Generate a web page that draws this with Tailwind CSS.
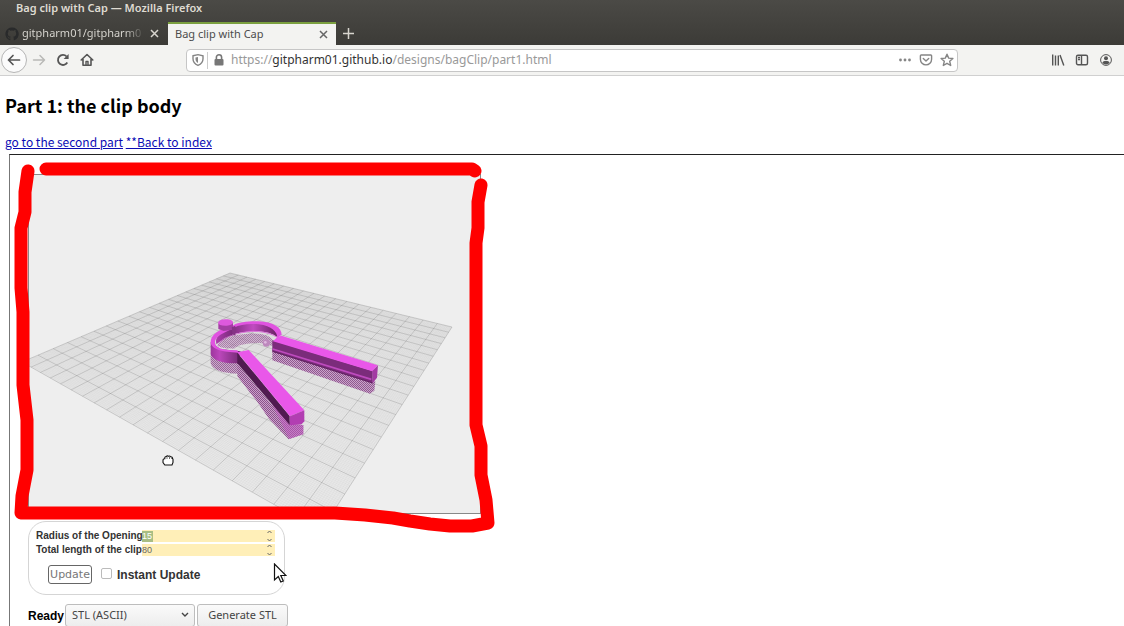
<!DOCTYPE html>
<html lang="en">
<head>
<meta charset="utf-8">
<title>Bag clip with Cap</title>
<script src="https://cdn.jsdelivr.net/npm/@tailwindcss/browser@4"></script>
</head>
<body class="min-h-screen overflow-hidden bg-white text-black">
<header class="font-['Noto_Sans',sans-serif]">
  <div class="bg-linear-to-b from-[#4b4a46] to-[#3c3b37]">
    <div class="flex h-[22px] items-start pl-4 text-[11px] leading-4 font-semibold text-[#dfdbd2]">Bag clip with Cap — Mozilla Firefox</div>
    <div class="flex h-[23px] items-stretch text-[11px]">
      <div class="flex w-[168px] items-center gap-[2px] pr-[6px] pl-1">
        <svg class="size-4 shrink-0" viewBox="0 0 16 16" fill="#292a2b"><path d="M8 1.5a6.5 6.5 0 0 0-2.1 12.7c.4.1.5-.2.5-.4v-1.300c-1.800.4-2.200-.8-2.200-.8-.3-.7-.7-.9-.7-.9-.6-.4 0-.4 0-.4.7 0 1 .7 1 .7.6 1 1.500.7 1.900.5 0-.4.2-.7.4-.8-1.500-.2-3-.7-3-3.200 0-.7.3-1.300.7-1.800-.1-.2-.3-.9.1-1.700 0 0 .5-.2 1.700.7a6 6 0 0 1 3.400 0c1.200-.9 1.700-.7 1.700-.7.4.8.2 1.500.1 1.700.4.5.7 1.100.7 1.800 0 2.500-1.500 3-3 3.200.3.2.5.6.5 1.200v1.800c0 .2.1.5.5.4A6.5 6.5 0 0 0 8 1.500z"/></svg>
        <span class="min-w-0 flex-1 bg-linear-to-r from-[#dedcd6] from-85% to-[#44433f] bg-clip-text whitespace-nowrap text-transparent">gitpharm01/gitpharm0</span>
        <button aria-label="Close tab" class="flex size-4 items-center justify-center text-[#d8d5ce]"><svg class="size-[9px]" viewBox="0 0 9 9" fill="none" stroke="currentColor" stroke-width="1.5"><path d="M1 1l7 7M8 1l-7 7"/></svg></button>
      </div>
      <div class="flex w-[168px] items-center justify-between border-t-2 border-[#7ba03f] bg-[#f3f3f1] pr-[5px] pl-[7px] text-[#4c4c4c]">
        <span>Bag clip with Cap</span>
        <button aria-label="Close tab" class="flex size-4 items-center justify-center text-[#666]"><svg class="size-[9px]" viewBox="0 0 9 9" fill="none" stroke="currentColor" stroke-width="1.5"><path d="M1 1l7 7M8 1l-7 7"/></svg></button>
      </div>
      <button aria-label="New tab" class="flex w-6 items-center justify-center text-[#d8d5ce]"><svg class="size-[11px]" viewBox="0 0 11 11" fill="none" stroke="currentColor" stroke-width="1.5"><path d="M5.500 0v11M0 5.500h11"/></svg></button>
    </div>
  </div>
  <nav class="flex h-[31px] items-center border-b border-[#d0d0d0] bg-[#f3f3f1] text-[#555]">
    <button aria-label="Back" class="ml-[1px] flex size-[26px] items-center justify-center rounded-full border border-[#b5b5b5] bg-[#fbfbfb]"><svg class="size-4" viewBox="0 0 16 16" fill="none" stroke="currentColor" stroke-width="1.7" stroke-linecap="round" stroke-linejoin="round"><path d="M13.500 8H2.500M7 3.500L2.500 8 7 12.500"/></svg></button>
    <button aria-label="Forward" class="ml-1 text-[#b9b9b7]"><svg class="size-4" viewBox="0 0 16 16" fill="none" stroke="currentColor" stroke-width="1.500" stroke-linecap="round" stroke-linejoin="round"><path d="M2.500 8h11M9 3.500L13.500 8 9 12.500"/></svg></button>
    <button aria-label="Reload" class="ml-2"><svg class="size-4" viewBox="0 0 16 16" fill="none" stroke="currentColor" stroke-width="1.800"><path d="M12.300 10.500A5 5 0 1 1 11.600 4.500"/><path d="M13.600 2v5H8.600z" fill="currentColor" stroke="none"/></svg></button>
    <button aria-label="Home" class="ml-2"><svg class="size-4" viewBox="0 0 16 16" fill="none" stroke="currentColor" stroke-width="1.600" stroke-linejoin="round" stroke-linecap="round"><path d="M2.200 8L8 2.500 13.800 8M4 7v6.200h8V7"/><path d="M7 13V9.500h2V13" stroke-width="1.400"/></svg></button>
    <div class="ml-[91px] flex h-[23px] w-[772px] items-center rounded-sm border border-[#c6c6c6] bg-white pr-[3px] pl-1 text-[#858585]">
      <svg class="size-[14px]" viewBox="0 0 14 14" fill="none" stroke="currentColor" stroke-width="1.400"><path d="M2 2.700L7 1.600l5 1.100v3.100c0 3.200-1.800 5.300-5 6.600-3.200-1.300-5-3.400-5-6.600z"/><path d="M7 4v6C5.300 9 4.500 7.800 4.500 6V4.500z" fill="currentColor" stroke="none"/></svg>
      <span class="mx-[2px] h-[17px] w-px bg-[#ccc]"></span>
      <svg class="ml-[1px] size-4" viewBox="0 0 16 16"><rect x="3.500" y="7" width="9" height="6.500" rx="1" fill="#777"/><path d="M5.400 7.500V5.300a2.600 2.600 0 0 1 5.200 0v2.200" fill="none" stroke="#777" stroke-width="1.600"/></svg>
      <div role="textbox" aria-label="Address" class="ml-1 flex-1 text-[12px] whitespace-nowrap text-[#999]">https://<span class="text-[#333]">gitpharm01.github.io</span>/designs/bagClip/part1.html</div>
      <div class="flex items-center gap-[7px]">
        <button aria-label="Page actions"><svg class="size-[14px]" viewBox="0 0 14 14" fill="currentColor"><circle cx="2.500" cy="7" r="1.400"/><circle cx="7" cy="7" r="1.400"/><circle cx="11.500" cy="7" r="1.400"/></svg></button>
        <button aria-label="Save to Pocket"><svg class="size-[14px]" viewBox="0 0 14 14" fill="none" stroke="currentColor" stroke-width="1.400" stroke-linecap="round" stroke-linejoin="round"><path d="M2.200 2h9.600q.8 0 .8.800v3.500a5.600 5.600 0 0 1-11.200 0V2.800q0-.8.800-.8z"/><path d="M4.300 5.500L7 8l2.700-2.500"/></svg></button>
        <button aria-label="Bookmark"><svg class="size-[14px]" viewBox="0 0 14 14" fill="none" stroke="currentColor" stroke-width="1.400" stroke-linejoin="round"><path d="M7 1.200l1.700 3.900 4.200.4-3.200 2.800 1 4.200L7 10.300l-3.700 2.200 1-4.200L1.100 5.500l4.200-.4z"/></svg></button>
      </div>
    </div>
    <div class="mr-[11px] ml-auto flex items-center gap-[10px]">
      <button aria-label="Library"><svg class="size-[14px]" viewBox="0 0 14 14" fill="none" stroke="currentColor" stroke-width="1.400"><path d="M1.700 1.500v11M4.500 2.500v10M7.300 2.500v10M9 2l3.800 10.500"/></svg></button>
      <button aria-label="Sidebars"><svg class="size-[14px]" viewBox="0 0 14 14" fill="none" stroke="currentColor" stroke-width="1.400"><rect x="1.500" y="2.200" width="11" height="9.600" rx="1.500"/><path d="M6.500 2v10M3 4.500h2M3 6.500h2"/></svg></button>
      <button aria-label="Account"><svg class="size-[14px]" viewBox="0 0 14 14" fill="currentColor"><circle cx="7" cy="7" r="5.400" fill="none" stroke="currentColor" stroke-width="1"/><circle cx="7" cy="5.200" r="2"/><path d="M3.300 9.800C4 8.300 5 8 7 8s3 .3 3.700 1.800A4.500 4.500 0 0 1 7 11.600a4.500 4.500 0 0 1-3.700-1.800z"/></svg></button>
    </div>
  </nav>
</header>
<main class="font-['Noto_Sans_CJK_JP','Noto_Sans_CJK_SC',sans-serif]">
  <h1 class="px-[5px] pt-[13px] text-[18px] leading-8 font-bold">Part 1: the clip body</h1>
  <p class="px-[5px] pt-[11px] pb-[2px] text-[12px] leading-5 text-[#0b0bb4]"><a class="underline" href="#second">go to the second part</a> <a class="underline" href="#index">**Back to index</a></p>
  <section class="ml-[9px] border-t border-l border-t-[#222] border-l-[#777] pt-[19px] pl-[18px] font-['Liberation_Sans',Arial,sans-serif]">
    <figure class="relative w-[453px]">
      <svg class="block w-full border border-[#888] bg-[#eee]" viewBox="29 175 451 338" role="img" aria-label="3D view of the clip">
        <path d="M230 273L452 327 321 531 22 362z" fill="#e8e8e8"/>
        <path id="minor" fill="none" stroke="#777" stroke-opacity=".11" stroke-width=".4"/>
        <path id="major" fill="none" stroke="#555" stroke-opacity=".34" stroke-width=".6"/>
        <defs>
          <pattern id="hatch" width="6" height="6" patternUnits="userSpaceOnUse"><path d="M0 0h6v6H0z" fill="#c9a0c9"/><path d="M0 0h3v3H0zM3 3h3v3H3z" fill="#8b528b"/></pattern>
          <linearGradient id="wall" x1="0" x2="1" y1="0" y2="0"><stop offset="0" stop-color="#ad3dad"/><stop offset=".25" stop-color="#7d2b7d"/><stop offset=".6" stop-color="#c14bc1"/><stop offset="1" stop-color="#65205f"/></linearGradient>
          <linearGradient id="outer" x1="0" x2="1" y1="0" y2="0"><stop offset="0" stop-color="#9d369d"/><stop offset=".3" stop-color="#bb47bb"/><stop offset="1" stop-color="#702970"/></linearGradient>
        </defs>
        <g transform="translate(190 300) scale(.33333)">
          <path d="M62 158v32c4 18 35 31 83 31v-40z" fill="url(#hatch)" opacity=".85"/>
          <path d="M84 138C100 113 125 105 175 101c40-2 70 5 75 25l-2 12c-20-8-37-11-58-8-28 2-43 4-58 16-22-1-38-1-48-8z" fill="url(#hatch)" opacity=".65"/>
          <circle cx="229" cy="129" r="11" fill="#bd88bd"/><circle cx="226" cy="127" r="4" fill="#dfbadf"/>
          <path d="M247 148l309 96-3 28-13 9-293-100z" fill="url(#hatch)" opacity=".95"/>
          <path d="M142 190l100 120 58 62 40 3v28l-44 15-58-60-38-55-58-74z" fill="url(#hatch)"/>
          <path d="M240 301l64 68 36 7v27l-42 14z" fill="#c45ac4" opacity=".5"/>
          <path d="M62 126v35c4 17 32 30 82 29l8-36-60-7z" fill="url(#outer)"/>
          <path d="M130 80c25-14 105-14 124 2 11 8 12 19 8 30-20-19-70-25-129-10l-29 12-24 18c-5-9-1-25 21-38z" fill="url(#wall)"/>
          <path d="M136 103c50-15 95-10 126 9" fill="none" stroke="#da77da" stroke-width="3"/>
          <path d="M84 137c9-17 27-27 52-34" fill="none" stroke="#b44cb4" stroke-width="3"/>
          <path d="M145 158C99 157 63 148 62 127c0-20 18-33 39-41l16-4 14-7c15-8 43-12 75-11 42 2 69 18 69 40l-13 10c0-17-16-36-56-41-31-3-56 1-74 10l-31 16c-19 9-29 21-25 34 3 12 25 18 66 18z" fill="#e053e0"/>
          <path d="M85 70v17l16 6 28-4V68z" fill="#a33ea3"/>
          <path d="M84 69c2-9 12-11 25-11 13 0 20 4 20 10-2 6-12 9-23 9-13 0-21-3-22-8z" fill="#dd59dd"/>
          <path d="M125 82l11-5v30l-8-4z" fill="#853385"/>
          <path d="M247 121l301 92v37L247 155z" fill="#7b2c7b"/>
          <path d="M248 147l296 91" stroke="#be4bbe" stroke-width="5"/><path d="M248 154l300 95" stroke="#5f205f" stroke-width="3"/>
          <path d="M262 111l12-4 289 89-16 18-298-90z" fill="#e957e9"/><path d="M547 213l17-17-3 37-8 10-5 7z" fill="#a33ba3"/>
          <path d="M142 158l157 190v27L142 190z" fill="#501b50"/>
          <path d="M142 157l34-7 167 181-43 18z" fill="#e957e9"/><path d="M300 349l43-18v33l-8 9-35 3z" fill="#b23eb2"/>
        </g>
        <path d="M163 460.500q0-2 1.800-1.800v-1q.2-1.400 1.600-1.200.8-1.200 2-.2 1.300-.8 2.200.5 1.900-.2 1.900 1.500l.5 1v3.200l-1 2.500h-7.200l-1.800-2.500z" fill="#fff" stroke="#111" stroke-width="1.100"/>
        <path d="M167 457v2M169.500 457v2M171.700 457.500v1.500" stroke="#111" stroke-width=".6"/>
      </svg>
      <svg class="absolute -top-[14px] -left-[18px] h-[380px] w-[490px]" viewBox="10 160 490 380" fill="none" stroke="#f00" stroke-width="13" stroke-linecap="round" stroke-linejoin="round" aria-hidden="true">
        <path d="M46 169H472l3 2"/>
        <path d="M28 171L25 192V212L21 228V288L23 312V385L27 420V470L22 496 21 513H335L365 515 393 518 410 521 430 524 450 526 472 526 488 523 486 500 481 475V446L476 425V243L478 228V202L481 185"/>
      </svg>
    </figure>
    <form class="mt-[7px] w-[257px] rounded-[18px] border border-[#d5d5d5] pt-[8px] pr-[9px] pb-[10px] pl-[7px]">
      <div class="grid grid-cols-[105px_1fr] gap-x-[1px] gap-y-[2px] text-[10px] leading-3 font-bold text-[#333]">
        <label for="radius" class="text-right whitespace-nowrap">Radius of the Opening</label>
        <div class="flex h-3 min-w-0 items-center bg-[#ffefb8]"><input id="radius" type="text" value="15" class="h-[11px] w-[11px] bg-[#a8bd83] p-0 text-[9px] leading-none font-normal text-white"><svg class="mr-[1px] ml-auto h-3 w-[9px]" viewBox="0 0 9 12" fill="none" stroke="#666"><path d="M2.500 3l2-2 2 2M2.500 9l2 2 2-2"/></svg></div>
        <label for="length" class="text-right whitespace-nowrap">Total length of the clip</label>
        <div class="flex h-3 min-w-0 items-center bg-[#ffefb8]"><input id="length" type="text" value="80" class="h-[11px] w-[20px] p-0 text-[9px] leading-none font-normal text-[#666]"><svg class="mr-[1px] ml-auto h-3 w-[9px]" viewBox="0 0 9 12" fill="none" stroke="#666"><path d="M2.500 3l2-2 2 2M2.500 9l2 2 2-2"/></svg></div>
      </div>
      <div class="mt-[9px] flex items-center pl-3">
        <button type="button" class="h-[19px] w-11 rounded-[3px] border border-[#666] font-['DejaVu_Sans',sans-serif] text-[11px] leading-none text-[#777]">Update</button>
        <input id="instant" type="checkbox" class="mr-[5px] mb-[3px] ml-[9px] size-[11px] appearance-none rounded-xs border border-[#bbb] bg-white">
        <label for="instant" class="text-xs font-bold text-[#333]">Instant Update</label>
      </div>
    </form>
    <div class="mt-[9px] flex items-center text-[#444]">
      <label for="format" class="w-[37px] text-xs font-bold text-black">Ready</label>
      <div class="relative mr-[2px]">
        <select id="format" class="block h-[23px] w-[130px] appearance-none rounded-[3px] border border-[#bdbdbd] bg-linear-to-b from-[#fafafa] to-[#ededed] pl-[6px] font-['Noto_Sans',sans-serif] text-[11px]"><option>STL (ASCII)</option></select>
        <svg class="pointer-events-none absolute top-2 right-[6px] h-[6px] w-[8px]" viewBox="0 0 8 6" fill="none" stroke="#444" stroke-width="1.400"><path d="M1 1l3 3 3-3"/></svg>
      </div>
      <button class="h-[23px] w-[91px] rounded-[3px] border border-[#bdbdbd] bg-linear-to-b from-[#fafafa] to-[#ededed] font-['Noto_Sans',sans-serif] text-[11px]">Generate STL</button>
    </div>
  </section>
</main>
<svg class="pointer-events-none absolute top-[563px] left-[273px] h-5 w-[14px]" viewBox="0 0 14 20" aria-hidden="true"><path d="M1.500 1v16l3.800-3.500 2.500 5.500 2.500-1-2.500-5.500H13z" fill="#fff" stroke="#111" stroke-width="1.200"/></svg>
<script>
  // Perspective projection of the build plate: 200 mm square, 1 mm and 10 mm lines
  const [a, b, d, c] = [[230, 273], [452, 327], [321, 531], [22, 362]];
  const dx1 = b[0] - d[0], dy1 = b[1] - d[1], dx2 = c[0] - d[0], dy2 = c[1] - d[1];
  const sx = a[0] - b[0] + d[0] - c[0], sy = a[1] - b[1] + d[1] - c[1];
  const det = dx1 * dy2 - dx2 * dy1;
  const g = (sx * dy2 - dx2 * sy) / det, h = (dx1 * sy - sx * dy1) / det;
  const project = (u, v) => {
    const w = g * u + h * v + 1;
    const at = i => ((b[i] - a[i] + g * b[i]) * u + (c[i] - a[i] + h * c[i]) * v + a[i]) / w;
    return at(0).toFixed(2) + ' ' + at(1).toFixed(2);
  };
  const grid = n => {
    let path = '';
    for (let i = 0; i <= n; i++) {
      const t = i / n;
      path += 'M' + project(t, 0) + 'L' + project(t, 1) + 'M' + project(0, t) + 'L' + project(1, t);
    }
    return path;
  };
  document.getElementById('minor').setAttribute('d', grid(200));
  document.getElementById('major').setAttribute('d', grid(20));
</script>
</body>
</html>
